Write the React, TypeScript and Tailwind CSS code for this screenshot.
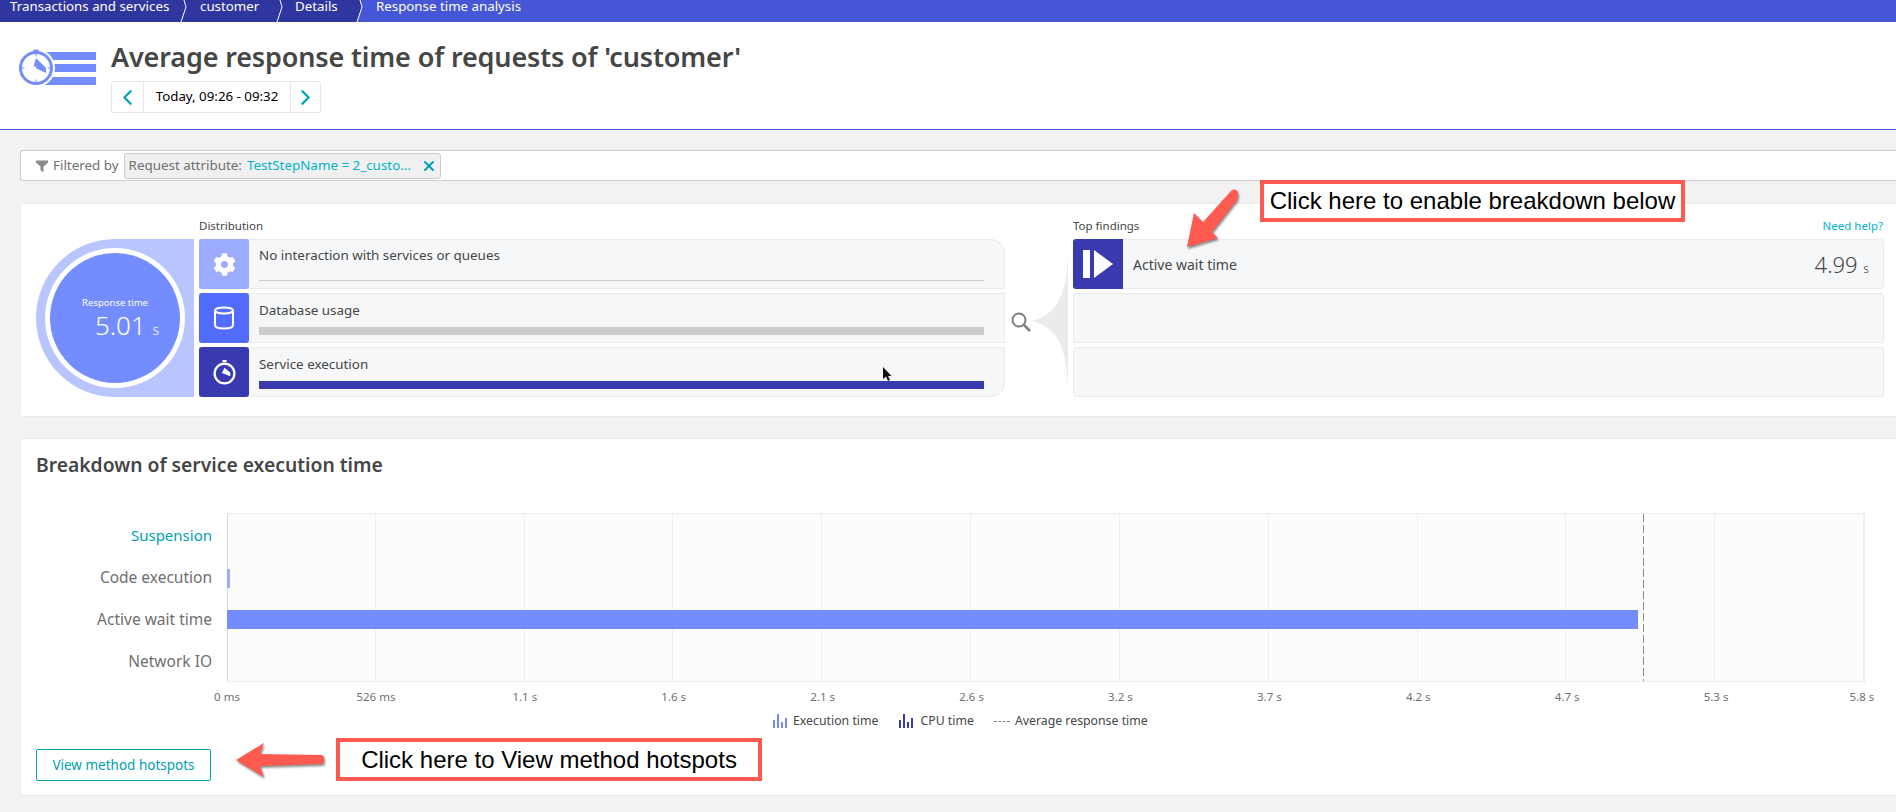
import React from 'react'
import { ChevronLeft, ChevronRight, X } from 'lucide-react'
import { FaCog } from 'react-icons/fa'

const font = "font-['Noto_Sans',sans-serif]"

const Crumb = ({ label, width, pad, nextBlue }: { label: string; width: number; pad: number; nextBlue?: boolean }) => (
  <div
    className="relative h-[22px] shrink-0 bg-[#3036a0] text-[13.3px] leading-[13px] text-white"
    style={{ width, paddingLeft: pad }}
  >
    <span className="block whitespace-nowrap">{label}</span>
    <svg className="absolute right-0 top-0" width="8" height="22" viewBox="0 0 8 22">
      {nextBlue && <path d="M5 0 L7 7 L2 22 H8 V0 Z" fill="#4556d7" />}
      <path d="M5 0 L7 7 L2 22" fill="none" stroke="#fff" strokeWidth="1" />
    </svg>
  </div>
)

const Stopwatch = ({ size, color }: { size: number; color: string }) => (
  <svg width={size} height={size} viewBox="0 0 24 24" fill="none">
    <rect x="10" y="0" width="4" height="2" fill={color} />
    <circle cx="12" cy="13" r="9.5" stroke={color} strokeWidth="2.2" />
    <path d="M12 7.5 L17.5 12 L17.5 15.5 L9.5 12.5 Z" fill={color} />
  </svg>
)

const DistRow = ({
  icon,
  iconBg,
  label,
  bar,
  rounded,
  textPad,
}: {
  icon: React.ReactNode
  iconBg: string
  label: string
  bar: string
  rounded?: string
  textPad: string
}) => (
  <div className={`flex h-[50px] border border-[#e8eaed] bg-[#f6f7f9] ${rounded ?? ''}`}>
    <div className={`-m-px flex h-[50px] w-[50px] shrink-0 items-center justify-center rounded-[3px] ${iconBg}`}>{icon}</div>
    <div className="relative flex-1 pl-[11px] pr-[20px]">
      <div className={`${textPad} text-[13.4px] leading-[18px] text-[#454646]`}>{label}</div>
      <div className={`absolute left-[11px] right-[20px] ${bar}`} />
    </div>
  </div>
)

const ticks = ['0 ms', '526 ms', '1.1 s', '1.6 s', '2.1 s', '2.6 s', '3.2 s', '3.7 s', '4.2 s', '4.7 s', '5.3 s', '5.8 s']

const LegendBars = ({ color }: { color: string }) => (
  <svg width="14" height="14" viewBox="0 0 14 14" fill={color}>
    <rect x="0" y="6" width="2" height="8" />
    <rect x="4" y="0" width="2" height="14" />
    <rect x="8" y="8" width="2" height="6" />
    <rect x="12" y="4" width="2" height="10" />
  </svg>
)

export default function App() {
  return (
    <div className={`relative h-[812px] w-[1896px] overflow-hidden bg-[#f2f2f2] ${font}`}>
      {/* breadcrumb */}
      <div className="flex h-[22px] bg-[#4556d7]">
        <Crumb label="Transactions and services" width={187} pad={10} />
        <Crumb label="customer" width={96} pad={13} />
        <Crumb label="Details" width={80} pad={12} nextBlue />
        <div className="pl-[13px] text-[13.3px] leading-[13px] text-white">Response time analysis</div>
      </div>

      {/* header */}
      <div className="flex h-[108px] border-b border-[#4556d7] bg-white">
        <div className="w-[111px] shrink-0 pl-[19px] pt-[27px]">
          <svg width="78" height="39" viewBox="0 0 78 39" fill="none">
            <rect x="24" y="3" width="53" height="8" fill="#738dff" />
            <rect x="24" y="15" width="53" height="8" fill="#738dff" />
            <rect x="24" y="28" width="53" height="8" fill="#738dff" />
            <circle cx="17" cy="19" r="19" fill="#fff" />
            <rect x="14.5" y="0.5" width="5" height="2.5" fill="#738dff" />
            <circle cx="17" cy="19" r="15.5" stroke="#738dff" strokeWidth="3" fill="#fff" />
            <path d="M17 9 L27 19 L27 24 L14.5 18 Z" fill="#738dff" />
            <circle cx="16" cy="18.5" r="1.3" fill="#fff" />
            <path d="M17 5 V7.5 M17 30.5 V33 M3 19 H5.5 M28.5 19 H31" stroke="#738dff" />
          </svg>
        </div>
        <div>
          <h1 className="pt-[16px] text-[27px] font-semibold leading-[38px] tracking-[-0.15px] text-[#454646]">
            Average response time of requests of 'customer'
          </h1>
          <div className="mt-[5px] flex h-[32px] w-[210px] items-stretch rounded-[3px] border border-[#e6e6e6] bg-white">
            <div className="flex w-[32px] items-center justify-center border-r border-[#e6e6e6]">
              <ChevronLeft size={25} strokeWidth={2.2} className="text-[#00a1b2]" />
            </div>
            <div className="flex w-[146px] items-center justify-center text-[13.3px] text-black">Today, 09:26 - 09:32</div>
            <div className="flex flex-1 items-center justify-center border-l border-[#e6e6e6]">
              <ChevronRight size={25} strokeWidth={2.2} className="text-[#00a1b2]" />
            </div>
          </div>
        </div>
      </div>

      <div className="pl-[20px] pt-[20px]">
        {/* filter bar */}
        <div className="flex h-[31px] items-center rounded-l-[3px] border border-r-0 border-[#cccccc] bg-white pl-[15px]">
          <svg width="12" height="12" viewBox="0 0 12 12" fill="#8a8a8a">
            <path d="M0 0.5 H12 V2.5 L7.5 6.5 V12 L4.5 10.5 V6.5 L0 2.5 Z" />
          </svg>
          <span className="ml-[5px] text-[13.4px] text-[#6f6f6f]">Filtered by</span>
          <div className="ml-[5px] flex h-[26px] w-[317px] items-center rounded-[3px] border border-[#cccccc] bg-[#f0f0f0] pl-[4px] text-[13.4px]">
            <span className="text-[#6f6f6f]">Request attribute:</span>
            <span className="ml-[5px] text-[#00b4cc]">TestStepName = 2_custo...</span>
            <X size={16} strokeWidth={3} className="ml-auto mr-[3px] text-[#00a1b2]" />
          </div>
        </div>

        {/* distribution card */}
        <div className="ml-px mt-[22px] flex h-[214px] rounded-l-[3px] border-b border-t border-[#ebebeb] bg-white pl-[15px] pr-[12px]">
          <div className="mt-[35px] flex h-[158px] w-[158px] shrink-0 items-center justify-center rounded-l-[79px] bg-[#b8c5ff]">
            <div className="h-[140px] w-[140px] rounded-full bg-white p-[5px]">
              <div className="flex h-[130px] w-[130px] flex-col items-center justify-center rounded-full bg-[#738dff] pt-[5px] text-white">
                <div className="text-[9.5px] leading-[14px]">Response time</div>
                <div className="pl-[24px] text-[26px] font-light leading-[30px]">
                  5.01 <span className="text-[14px]">s</span>
                </div>
              </div>
            </div>
          </div>

          <div className="ml-[5px] w-[806px] shrink-0 pt-[11px]">
            <div className="h-[24px] text-[11.5px] leading-[22px] text-[#454646]">Distribution</div>
            <div className="flex flex-col gap-[4px]">
              <DistRow
                iconBg="bg-[#9bacff]"
                icon={<FaCog size={23} className="text-white" />}
                label="No interaction with services or queues"
                bar="bottom-[7px] h-px bg-[#cccccc]"
                rounded="rounded-tr-[14px]"
                textPad="pt-[6px]"
              />
              <DistRow
                iconBg="bg-[#526cff]"
                icon={
                  <svg width="22" height="24" viewBox="0 0 22 24" fill="none" stroke="#fff" strokeWidth="2">
                    <ellipse cx="11" cy="4.5" rx="9" ry="3" />
                    <path d="M2 4.5 V19 C2 21.5 6 22.5 11 22.5 C16 22.5 20 21.5 20 19 V4.5" />
                  </svg>
                }
                label="Database usage"
                bar="bottom-[7px] h-[8px] bg-[#cccccc]"
                textPad="pt-[7px]"
              />
              <DistRow
                iconBg="bg-[#393ab0]"
                icon={<Stopwatch size={25} color="#fff" />}
                label="Service execution"
                bar="bottom-[7px] h-[8px] bg-[#393ab0]"
                rounded="rounded-br-[14px]"
                textPad="pt-[7px]"
              />
            </div>
          </div>

          {/* connector */}
          <div className="relative w-[68px] shrink-0">
            <svg className="absolute left-[5px] top-[107px]" width="22" height="22" viewBox="0 0 22 22" fill="none" stroke="#808080">
              <circle cx="9" cy="9" r="6.5" strokeWidth="2" />
              <path d="M14 14 L20 20" strokeWidth="2.5" />
            </svg>
            <svg className="absolute left-[26px] top-[48px]" width="38" height="138" viewBox="0 0 38 138" fill="#ebebeb">
              <path d="M37 0 C36 40 28 62 1 69 C28 76 36 98 37 138 Z" />
            </svg>
          </div>

          <div className="min-w-0 flex-1 pt-[11px]">
            <div className="flex h-[24px] justify-between pr-[1px] text-[11.5px] leading-[22px]">
              <span className="text-[#454646]">Top findings</span>
              <span className="text-[#00b4cc]">Need help?</span>
            </div>
            <div className="flex flex-col gap-[4px]">
              <div className="flex h-[50px] rounded-[3px] border border-[#e8eaed] bg-[#f6f7f9]">
                <div className="-m-px flex h-[50px] w-[50px] shrink-0 items-center justify-center rounded-l-[3px] bg-[#393ab0]">
                  <svg width="30" height="28" viewBox="0 0 30 28" fill="#fff">
                    <rect x="0" y="0" width="7" height="28" />
                    <path d="M11 0 L30 14 L11 28 Z" />
                  </svg>
                </div>
                <div className="flex flex-1 items-center justify-between pl-[11px] pr-[14px] pt-[1px]">
                  <span className="text-[14px] text-[#454646]">Active wait time</span>
                  <span className="text-[22px] font-light text-[#454646]">
                    4.99 <span className="text-[12px]">s</span>
                  </span>
                </div>
              </div>
              <div className="h-[50px] rounded-[3px] border border-[#e8eaed] bg-[#f6f7f9]" />
              <div className="h-[50px] rounded-[3px] border border-[#e8eaed] bg-[#f6f7f9]" />
            </div>
          </div>
        </div>

        {/* breakdown card */}
        <div className="ml-px mt-[21px] h-[358px] rounded-l-[3px] border-b border-t border-[#ebebeb] bg-white pl-[15px]">
          <h2 className="pt-[13px] text-[19.3px] font-semibold leading-[26px] text-[#454646]">Breakdown of service execution time</h2>

          <div className="mt-[35px] flex">
            <div className="w-[191px] shrink-0 pr-[15px] pt-px text-right text-[15.5px] leading-[42px] text-[#6f6f6f]">
              <div className="text-[15px] text-[#00a1b2]">Suspension</div>
              <div>Code execution</div>
              <div>Active wait time</div>
              <div>Network IO</div>
            </div>
            <div className="relative h-[169px] w-[1638px] shrink-0 border-b border-r border-t border-[#ececec] bg-[#fcfcfc]">
              <div className="absolute inset-0 grid grid-cols-11">
                {ticks.slice(1).map(t => (
                  <div key={t} className="border-r border-[#efefef]" />
                ))}
              </div>
              <div className="absolute inset-y-0 left-0 w-px bg-[#cfd6ee]" />
              <div className="absolute left-0 top-[55px] h-[19px] w-[3px] bg-[#9bacff]" />
              <div className="absolute left-0 top-[96px] h-[19px] w-[1411px] bg-[#738dff]" />
              <div className="absolute inset-y-0 left-[1416px] w-px bg-[repeating-linear-gradient(to_bottom,#8a8a8a_0,#8a8a8a_8px,transparent_8px,transparent_11px)]" />
            </div>
          </div>

          <div className="ml-[191px] flex h-[30px] w-[1638px] items-center justify-between text-[11.5px] text-[#6f6f6f]">
            {ticks.map((t, i) => (
              <div key={t} className="flex w-0 justify-center whitespace-nowrap">
                <span className={i === 11 ? '-ml-[6px]' : ''}>{t}</span>
              </div>
            ))}
          </div>

          <div className="ml-[737px] flex h-[17px] items-center pt-px text-[12.3px] text-[#454646]">
            <LegendBars color="#738dff" />
            <span className="ml-[6px]">Execution time</span>
            <div className="ml-[21px]" />
            <LegendBars color="#393ab0" />
            <span className="ml-[7px]">CPU time</span>
            <div className="ml-[20px] w-[16px] border-t border-dashed border-[#8a8a8a]" />
            <span className="ml-[5px]">Average response time</span>
          </div>

          <button className="mt-[20px] flex h-[32px] w-[175px] items-center justify-center rounded-[2px] border border-[#00a1b2] bg-white text-[13.5px] text-[#00a1b2]">
            View method hotspots
          </button>
        </div>
      </div>

      {/* annotations */}
      <div className="absolute left-[1260px] top-[180px] flex h-[42px] w-[425px] items-center justify-center border-[4px] border-[#ff5a4f] bg-white font-['Liberation_Sans',sans-serif] text-[24px] text-black">
        Click here to enable breakdown below
      </div>
      <div className="absolute left-[336px] top-[738px] flex h-[43px] w-[426px] items-center justify-center border-[4px] border-[#ff5a4f] bg-white font-['Liberation_Sans',sans-serif] text-[24px] text-black">
        Click here to View method hotspots
      </div>
      <svg className="absolute left-[1180px] top-[185px] drop-shadow-[1px_2px_1px_rgba(0,0,0,0.45)]" width="65" height="70" viewBox="0 0 65 70">
        <path d="M7 62 L14 28 L23 37 L52 5 Q57 3 58 8 Q58 12 57 15 L32 47 L38 53 Z" fill="#ff5a4f" />
      </svg>
      <svg className="absolute left-[230px] top-[738px] drop-shadow-[1px_2px_1px_rgba(0,0,0,0.45)]" width="100" height="46" viewBox="0 0 100 46">
        <path d="M6 22 L34 5 L30 16 L91 17 Q94 17 94 20 V23 Q94 26 91 26 L30 28 L34 39 Z" fill="#ff5a4f" />
      </svg>
      {/* mouse pointer */}
      <svg className="absolute left-[882px] top-[367px]" width="10" height="16" viewBox="0 0 10 16" fill="#111">
        <path d="M1 0 V12 L4 9.5 L6 14 L8 13 L6 9 H9.5 Z" />
      </svg>
    </div>
  )
}
